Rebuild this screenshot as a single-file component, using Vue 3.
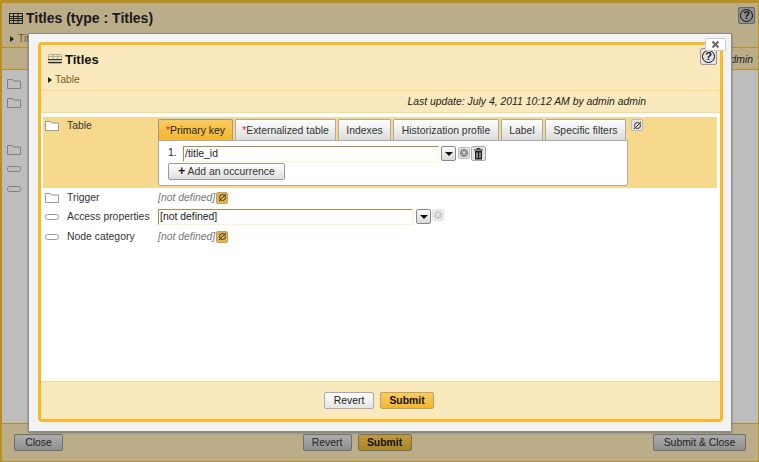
<template>
  <div class="page">
    <div class="head">
      <div class="head-title">
        <svg class="table-icon" width="14" height="11" viewBox="0 0 14 11">
          <rect x="0.5" y="0.5" width="13" height="10" fill="#b5ab92" stroke="#222" />
          <path d="M0 3.5h14M0 5.5h14M0 7.5h14M4.5 0v11M9 0v11" stroke="#222" fill="none" />
        </svg>
        <span>Titles (type : Titles)</span>
        <button class="help dark">?</button>
      </div>
      <div class="crumb dark-crumb"><i class="arrow"></i>Titles</div>
    </div>
    <div class="stamp">Last update: July 4, 2011 10:12 AM by admin admin</div>
    <div class="body">
      <div v-for="y in bgRows" :key="y.id" class="bg-row" :style="{ height: y.h + 'px' }">
        <svg v-if="y.kind === 'folder'" width="14" height="11" viewBox="0 0 14 11">
          <path d="M.5 10.500v-9h5l1 1.500h7v7.500z" fill="none" stroke="#808080" />
        </svg>
        <svg v-else-if="y.kind === 'leaf'" width="14" height="6" viewBox="0 0 14 6">
          <rect x=".5" y=".5" width="13" height="5" rx="2" fill="none" stroke="#808080" />
        </svg>
      </div>
    </div>
    <div class="foot">
      <button class="btn dim">Close</button>
      <div class="foot-mid">
        <button class="btn dim">Revert</button>
        <button class="btn dim-main">Submit</button>
      </div>
      <button class="btn dim">Submit &amp; Close</button>
    </div>

    <div class="modal">
      <button class="close">
        <svg width="9" height="9" viewBox="0 0 9 9"><path d="M1.500 1.500l6 6M7.500 1.500l-6 6" stroke="#666" stroke-width="2" /></svg>
      </button>
      <div class="frame">
        <div class="m-head">
          <div class="m-title">
            <svg width="14" height="10" viewBox="0 0 14 10">
              <rect x=".5" y=".5" width="13" height="9" rx="1" fill="#fae9bd" stroke="#b5ab92" />
              <path d="M0 2.500h14M5 0v5M9.500 0v5" stroke="#b5ab92" fill="none" />
              <path d="M0 5.500h14M0 8.500h14" stroke="#333" />
              <rect x="0" y="6" width="14" height="2" fill="#c9c2ae" />
            </svg>
            <span>Titles</span>
          </div>
          <div class="crumb"><i class="arrow"></i>Table</div>
          <button class="help">?</button>
        </div>
        <div class="m-stamp">Last update: July 4, 2011 10:12 AM by admin admin</div>
        <div class="m-body">
          <div class="row open">
            <svg class="ico" width="14" height="11" viewBox="0 0 14 11">
              <path d="M.5 10.500v-9h5l1 1.500h7v7.500z" fill="#fff" stroke="#9a9a9a" />
            </svg>
            <div class="label">Table</div>
            <div class="tabset">
              <div class="tabs">
                <div v-for="t in tabs" :key="t.name" class="tab" :class="{ active: t.active }" :style="{ width: t.w + 'px' }">
                  <span v-if="t.req" class="req">*</span>{{ t.name }}
                </div>
              </div>
              <div class="panel">
                <div class="occ">
                  <span class="num">1.</span>
                  <div class="input key">/title_id</div>
                  <button class="drop"><i></i></button>
                  <button class="mini round">
                    <svg width="10" height="10" viewBox="0 0 10 10">
                      <circle cx="5" cy="5" r="4" fill="#8d8d8d" />
                      <path d="M3.500 3.500l3 3M6.500 3.500l-3 3" stroke="#e0e0e0" stroke-width="1.200" />
                    </svg>
                  </button>
                  <button class="trash">
                    <svg width="9" height="12" viewBox="0 0 9 12">
                      <path d="M0 2h9M3 2V.5h3V2" stroke="#222" fill="none" />
                      <path d="M1 3h7v8.500H1z" fill="#222" />
                      <path d="M3 4.500v5.500M6 4.500v5.500" stroke="#ddd" />
                    </svg>
                  </button>
                </div>
                <button class="add"><b>+</b> Add an occurrence</button>
              </div>
            </div>
            <button class="mini null-top">
              <svg width="9" height="9" viewBox="0 0 9 9"><circle cx="4.500" cy="4.500" r="3" fill="none" stroke="#333" /><path d="M1 8l7-7" stroke="#333" /></svg>
            </button>
          </div>
          <div class="row plain r-trigger">
            <svg class="ico" width="14" height="11" viewBox="0 0 14 11">
              <path d="M.5 10.500v-9h5l1 1.500h7v7.500z" fill="#fff" stroke="#9a9a9a" />
            </svg>
            <div class="label">Trigger</div>
            <span class="undef">[not defined]</span>
            <button class="mini null">
              <svg width="9" height="9" viewBox="0 0 9 9"><circle cx="4.500" cy="4.500" r="3" fill="none" stroke="#333" /><path d="M1 8l7-7" stroke="#333" /></svg>
            </button>
          </div>
          <div class="row plain r-access">
            <svg class="ico" width="14" height="6" viewBox="0 0 14 6">
              <rect x=".5" y=".5" width="13" height="5" rx="2" fill="#fff" stroke="#9a9a9a" />
            </svg>
            <div class="label">Access properties</div>
            <div class="input access">[not defined]</div>
            <button class="drop"><i></i></button>
            <button class="mini round faded">
              <svg width="10" height="10" viewBox="0 0 10 10">
                <circle cx="5" cy="5" r="4" fill="#8d8d8d" />
                <path d="M3.500 3.500l3 3M6.500 3.500l-3 3" stroke="#e0e0e0" stroke-width="1.200" />
              </svg>
            </button>
          </div>
          <div class="row plain r-node">
            <svg class="ico" width="14" height="6" viewBox="0 0 14 6">
              <rect x=".5" y=".5" width="13" height="5" rx="2" fill="#fff" stroke="#9a9a9a" />
            </svg>
            <div class="label">Node category</div>
            <span class="undef">[not defined]</span>
            <button class="mini null">
              <svg width="9" height="9" viewBox="0 0 9 9"><circle cx="4.500" cy="4.500" r="3" fill="none" stroke="#333" /><path d="M1 8l7-7" stroke="#333" /></svg>
            </button>
          </div>
        </div>
        <div class="m-foot">
          <button class="btn light">Revert</button>
          <button class="btn main">Submit</button>
        </div>
      </div>
    </div>
  </div>
</template>

<script setup>
const bgRows = [
  { id: 1, kind: 'folder', h: 19 },
  { id: 2, kind: 'folder', h: 19 },
  { id: 3, kind: '', h: 28 },
  { id: 4, kind: 'folder', h: 19 },
  { id: 5, kind: 'leaf', h: 20 },
  { id: 6, kind: 'leaf', h: 20 },
]

const tabs = [
  { name: 'Primary key', req: true, active: true, w: 75 },
  { name: 'Externalized table', req: true, w: 101 },
  { name: 'Indexes', w: 53 },
  { name: 'Historization profile', w: 106 },
  { name: 'Label', w: 42 },
  { name: 'Specific filters', w: 81 },
]
</script>

<style>
html, body {
  margin: 0;
  overflow: hidden;
}
</style>

<style scoped>
.page {
  position: relative;
  width: 759px;
  height: 462px;
  box-sizing: border-box;
  display: flex;
  flex-direction: column;
  background: #bbad88;
  border-top: 3px solid #b78f22;
  border-left: 2px solid #b78f22;
  border-right: 1px solid #b78f22;
  border-bottom: 1px solid #b78f22;
  font-family: "Liberation Sans", Arial, sans-serif;
  font-size: 10.4px;
  color: #222;
}
button {
  font-family: inherit;
  padding: 0;
  cursor: pointer;
}
.head {
  height: 45px;
  box-sizing: border-box;
  border-bottom: 1px solid #b78f22;
  padding: 3px 0 0 7px;
}
.head-title {
  display: flex;
  align-items: center;
  height: 24px;
  font-size: 14px;
  font-weight: bold;
  color: #1a1a1a;
}
.table-icon {
  margin-right: 3px;
}
.crumb {
  display: flex;
  align-items: center;
  color: #7a5f20;
  font-size: 10.4px;
}
.dark-crumb {
  color: #6b5a30;
  margin-top: 3px;
  padding-left: 1px;
}
.arrow {
  width: 0;
  height: 0;
  margin-right: 3px;
  border-left: 4px solid #222;
  border-top: 3.500px solid transparent;
  border-bottom: 3.500px solid transparent;
}
.dark-crumb .arrow {
  margin-right: 4px;
}
.help {
  position: absolute;
  width: 17px;
  height: 17px;
  border: 1px solid #999;
  border-radius: 2px;
  background: #e2e2e2;
  color: #111;
  font-size: 11px;
  font-weight: bold;
  line-height: 15px;
  text-align: center;
}
.help::after {
  content: "";
  position: absolute;
  inset: 1px;
  border: 1.500px solid #111;
  border-radius: 50%;
  box-sizing: border-box;
}
.help.dark {
  top: 4px;
  right: 3px;
  background: #8f8f8f;
  border-color: #666;
}
.stamp {
  height: 22px;
  box-sizing: border-box;
  border-bottom: 1px solid #b78f22;
  text-align: right;
  padding: 6px 5px 0 0;
  font-style: italic;
}
.body {
  flex: 1;
  background: #bdbdbd;
  padding: 4px 0 0 5px;
}
.bg-row {
  display: flex;
  align-items: center;
}
.foot {
  height: 38px;
  box-sizing: border-box;
  border-top: 1px solid #b78f22;
  display: flex;
  align-items: center;
  justify-content: space-between;
  padding: 0 12px;
}
.foot-mid {
  display: flex;
  gap: 6px;
  margin-right: 2px;
}
.btn {
  height: 17px;
  box-sizing: border-box;
  border: 1px solid #6f6f6f;
  border-radius: 2px;
  font-size: 10.4px;
  color: #222;
}
.foot .btn:first-child {
  width: 49px;
}
.foot > .btn:last-child {
  width: 93px;
}
.foot-mid .btn {
  width: 50px;
}
.foot-mid .btn + .btn {
  width: 54px;
}
.dim {
  background: linear-gradient(#adadad, #8f8f8f);
}
.dim-main {
  background: linear-gradient(#c39b38, #a98526);
  font-weight: bold;
  color: #111;
}
.modal {
  position: absolute;
  left: 27px;
  top: 31px;
  width: 702px;
  height: 397px;
  box-sizing: border-box;
  background: #f2f2f2;
  padding: 8px 8px 9px 9px;
  box-shadow: 0 0 0 1px #8c8c8c, 0 1px 2px 1px #777;
}
.close {
  position: absolute;
  top: 4px;
  right: 5px;
  width: 21px;
  height: 13px;
  z-index: 2;
  border: 1px solid #ccc;
  border-radius: 2px;
  background: #fff;
  display: flex;
  align-items: center;
  justify-content: center;
}
.frame {
  height: 100%;
  box-sizing: border-box;
  border: 3px solid #f6ba2c;
  border-radius: 4px;
  display: flex;
  flex-direction: column;
  background: #fff;
}
.m-head {
  position: relative;
  height: 46px;
  box-sizing: border-box;
  flex: none;
  background: #fae9bd;
  border-bottom: 1px solid #f9d98a;
  padding: 5px 0 0 7px;
}
.m-title {
  display: flex;
  align-items: center;
  gap: 3px;
  height: 18px;
  font-size: 13px;
  font-weight: bold;
  color: #111;
}
.m-head .crumb {
  margin-top: 6px;
}
.m-head .help {
  top: 3px;
  right: 3px;
}
.m-stamp {
  flex: none;
  height: 22px;
  box-sizing: border-box;
  background: #fae9bd;
  border-bottom: 1px solid #f9d98a;
  text-align: right;
  padding: 5px 74px 0 0;
  font-style: italic;
  color: #222;
}
.m-body {
  flex: 1;
  padding: 4px 3px 0 2px;
}
.row {
  display: flex;
  position: relative;
}
.ico {
  flex: none;
  margin: 3px 0 0 2px;
}
.label {
  width: 91px;
  flex: none;
  margin-left: 8px;
  color: #333;
}
.open {
  height: 71px;
  box-sizing: border-box;
  background: #f7d98e;
  padding-top: 2px;
}
.open .ico {
  margin-top: 1px;
}
.open .label {
  padding-top: 1px;
}
.tabs {
  display: flex;
  gap: 2px;
  height: 21px;
}
.tab {
  box-sizing: border-box;
  border: 1px solid #aaa;
  border-bottom: 0;
  border-radius: 2px 2px 0 0;
  background: linear-gradient(#fff, #dcdcdc);
  color: #333;
  text-align: center;
  line-height: 21px;
  white-space: nowrap;
}
.tab.active {
  background: linear-gradient(#f9cc60, #f3b62e);
  border-color: #999;
  color: #222;
}
.req {
  color: #d22;
}
.panel {
  width: 470px;
  height: 46px;
  box-sizing: border-box;
  border: 1px solid #aaa;
  border-radius: 0 0 3px 3px;
  background: #fff;
  padding: 5px 0 0 9px;
}
.occ {
  display: flex;
  align-items: flex-start;
  height: 17px;
}
.num {
  width: 15px;
  flex: none;
  line-height: 13px;
}
.input {
  box-sizing: border-box;
  height: 16px;
  background: #fff;
  border: 1px solid #fdf1d2;
  border-top-color: #a68d4f;
  border-left-color: #a68d4f;
  padding-left: 1px;
  line-height: 14px;
  color: #222;
}
.key {
  width: 256px;
}
.access {
  width: 255px;
  height: 16px;
}
.r-access .drop {
  margin-left: 3px;
}
.drop {
  width: 15px;
  height: 15px;
  margin-left: 2px;
  border: 1px solid #888;
  border-radius: 2px;
  background: linear-gradient(#fff, #d8d8d8);
  display: flex;
  align-items: center;
  justify-content: center;
}
.drop i {
  width: 0;
  height: 0;
  border-top: 4px solid #111;
  border-left: 4px solid transparent;
  border-right: 4px solid transparent;
}
.mini {
  width: 12px;
  height: 12px;
  border: 1px solid #bbb;
  border-radius: 2px;
  background: #e2e2e2;
  display: flex;
  align-items: center;
  justify-content: center;
  flex: none;
}
.round {
  margin-left: 2px;
  margin-top: 1px;
}
.round.faded {
  opacity: 0.45;
  margin-top: -3px;
  margin-left: 1px;
}
.trash {
  width: 15px;
  height: 15px;
  margin-left: 1px;
  border: 1px solid #aaa;
  border-radius: 2px;
  background: #e4e4e4;
  display: flex;
  align-items: center;
  justify-content: center;
}
.add {
  display: block;
  width: 117px;
  height: 17px;
  margin-top: 0;
  border: 1px solid #999;
  border-radius: 2px;
  background: linear-gradient(#fff, #dedede);
  color: #333;
  font-size: 10.4px;
}
.add b {
  color: #111;
  font-size: 12px;
  line-height: 10px;
}
.null-top {
  margin-left: 3px;
}
.plain {
  align-items: center;
  color: #333;
  height: 19px;
}
.plain .ico {
  margin-top: 0;
}
.plain .label {
  padding: 0;
}
.r-node {
  margin-top: 1px;
}
.undef {
  color: #777;
  font-style: italic;
  margin-right: 1px;
}
.null {
  background: #e8b63e;
  border-color: #b9a36a;
}
.m-foot {
  flex: none;
  height: 38px;
  box-sizing: border-box;
  border-top: 1px solid #f9d98a;
  background: #fae9bd;
  display: flex;
  align-items: center;
  justify-content: center;
  gap: 6px;
  margin-top: auto;
  padding-right: 3px;
}
.light {
  width: 50px;
  border-color: #aaa;
  background: linear-gradient(#fff, #e4e4e4);
}
.main {
  width: 54px;
  border-color: #b9a36a;
  background: linear-gradient(#f9cc60, #f3b62e);
  font-weight: bold;
  color: #111;
}
</style>
